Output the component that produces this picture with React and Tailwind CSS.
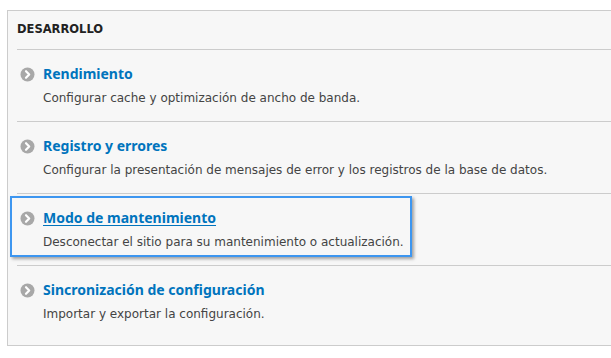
import React from "react";

const ITEMS = [
  { title: "Rendimiento", desc: "Configurar cache y optimización de ancho de banda." },
  { title: "Registro y errores", desc: "Configurar la presentación de mensajes de error y los registros de la base de datos." },
  { title: "Modo de mantenimiento", desc: "Desconectar el sitio para su mantenimiento o actualización.", focused: true },
  { title: "Sincronización de configuración", desc: "Importar y exportar la configuración." },
];

const Bullet = () => (
  <svg width="15" height="15" viewBox="0 0 15 15" className="shrink-0">
    <circle cx="7.5" cy="7.5" r="7" fill="#a8a8a8" />
    <path d="M6 4.2 L9.2 7.5 L6 10.8" fill="none" stroke="#fff" strokeWidth="2.2" strokeLinecap="round" strokeLinejoin="round" />
  </svg>
);

const AdminItem = ({ item }) => (
  <div className="border-t border-[#cccccc] pt-[2px] pb-[8px]">
    <div
      className={
        "inline-block ml-[-7px] pl-[8px] pr-[6px] pt-[10px] pb-[4px] border-2 " +
        (item.focused
          ? "border-[#3d96f0] shadow-[2px_2px_3px_rgba(0,0,0,0.35)]"
          : "border-transparent")
      }
    >
      <div className="flex items-center h-[20px]">
        <Bullet />
        <a
          href="#"
          className={
            "ml-[8px] text-[14px] font-bold text-[#0074bd] leading-[20px] " +
            (item.focused ? "underline underline-offset-2" : "no-underline")
          }
        >
          {item.title}
        </a>
      </div>
      <p className="mt-[5px] ml-[23px] font-['DejaVu_Sans',sans-serif] text-[12px] leading-[18px] text-[#444] whitespace-nowrap">
        {item.desc}
      </p>
    </div>
  </div>
);

export default function App() {
  return (
    <div
      className="w-[611px] h-[358px] overflow-hidden bg-white pt-[10px] pl-[7px]"
      style={{ fontFamily: '"Noto Sans", "DejaVu Sans", sans-serif' }}
    >
      <div className="w-[640px] border border-[#cccccc] bg-[#f7f7f7] pl-[9px] pb-[8px]">
        <h3 className="pt-[9px] pb-[11px] font-['DejaVu_Sans',sans-serif] text-[11.5px] leading-[18px] font-bold text-[#222] uppercase">
          Desarrollo
        </h3>
        {ITEMS.map((item) => (
          <AdminItem key={item.title} item={item} />
        ))}
      </div>
    </div>
  );
}
